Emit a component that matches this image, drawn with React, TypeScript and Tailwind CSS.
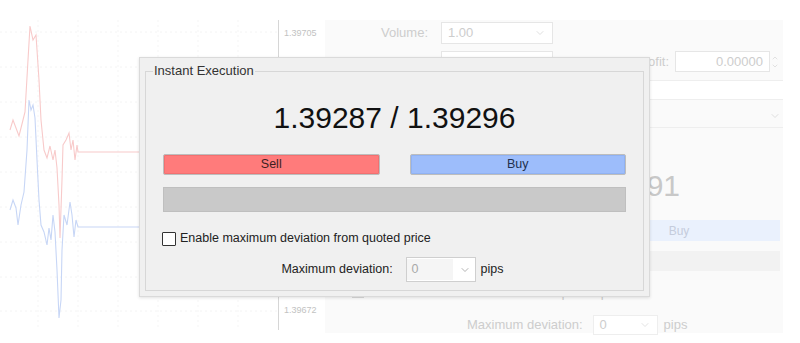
import { ChevronDown, ChevronUp } from "lucide-react";

const redPath = [
  [10, 130], [13, 120], [16, 128], [19, 136], [22, 124], [25, 112], [28, 60], [30, 26], [33, 40],
  [36, 35], [39, 80], [41, 120], [44, 150], [47, 158], [50, 146], [53, 160], [55, 150], [57, 168],
  [59, 205], [60, 238], [62, 180], [63, 145], [66, 140], [69, 133], [71, 150], [73, 140], [75, 160],
  [77, 145], [78, 152], [278, 152],
];

const bluePath = [
  [10, 210], [13, 200], [16, 208], [18, 225], [21, 205], [24, 192], [27, 150], [29, 100], [31, 110],
  [33, 105], [35, 118], [37, 160], [39, 200], [41, 225], [44, 232], [47, 245], [49, 228], [51, 240],
  [53, 215], [55, 232], [57, 270], [59, 318], [61, 300], [62, 250], [64, 215], [67, 225], [70, 202],
  [72, 215], [74, 237], [76, 220], [78, 227], [278, 227],
];

const toPoints = (pts: number[][]) => pts.map(([x, y]) => `${x},${y}`).join(" ");

function Chart() {
  const rows = [32, 67, 102, 137, 172, 207, 242, 277, 311];
  const cols = [38, 78, 118, 158, 198, 238];
  return (
    <svg width="278" height="343" viewBox="0 0 278 343" className="shrink-0">
      {rows.map((y) => (
        <line key={`r${y}`} x1="0" y1={y} x2="278" y2={y} stroke="#f4f4f4" strokeDasharray="2 3" />
      ))}
      {cols.map((x) => (
        <line key={`c${x}`} x1={x} y1="20" x2={x} y2="330" stroke="#f5f5f5" strokeDasharray="2 3" />
      ))}
      <polyline points={toPoints(redPath)} fill="none" stroke="#f8caca" strokeWidth="1.1" />
      <polyline points={toPoints(bluePath)} fill="none" stroke="#c7d6f6" strokeWidth="1.1" />
    </svg>
  );
}

function FadedDialog() {
  return (
    <div className="mt-[20px] h-[313px] w-[458px] bg-[#fafafa] text-[13px] text-[#cdcdcd]">
      {/* volume */}
      <div className="mt-[2px] flex h-[22px] items-center">
        <span className="w-[107px] pr-1 text-right">Volume:</span>
        <div className="ml-[9px] flex h-[22px] w-[112px] items-center justify-between border border-[#e6e6e6] bg-white px-1.5">
          <span>1.00</span>
          <ChevronDown className="h-3 w-3 text-[#d4d4d4]" strokeWidth={1.5} />
        </div>
      </div>
      {/* stop loss / take profit */}
      <div className="mt-[7px] flex h-[21px] items-center">
        <div className="ml-[116px] h-[21px] w-[112px] border border-[#e6e6e6] bg-white" />
        <span className="ml-auto pr-[6px]">Take Profit:</span>
        <div className="flex h-[21px] w-[95px] items-center justify-end border border-[#e6e6e6] bg-white px-1.5">
          0.00000
        </div>
        <div className="mr-[4px] flex w-[9px] flex-col items-center text-[#d4d4d4]">
          <ChevronUp className="h-2 w-2" strokeWidth={2} />
          <ChevronDown className="h-2 w-2" strokeWidth={2} />
        </div>
      </div>
      {/* comment */}
      <div className="ml-[20px] mt-[8px] h-[20px] border-y border-[#eeeeee] bg-white" />
      {/* type */}
      <div className="ml-[20px] mt-[5px] flex h-[23px] items-center justify-end border-b border-[#eeeeee] pr-[2px]">
        <ChevronDown className="h-3 w-3 text-[#d4d4d4]" strokeWidth={1.5} />
      </div>
      {/* price, mostly hidden behind the popup */}
      <div className="mt-[40px] flex h-[36px] items-center justify-end pr-[103px] text-[30px] leading-none text-[#c8c8c8]">
        91
      </div>
      <div className="mt-[16px] flex h-[21px] justify-end pr-[3px]">
        <div className="flex w-[202px] items-center justify-center bg-[#eaf1fd] text-[12px] text-[#c5ccdc]">Buy</div>
      </div>
      <div className="ml-[20px] mr-[3px] mt-[10px] h-[20px] bg-[#f2f2f2]" />
      <div className="mt-[15px] flex h-[13px] items-center pl-[27px]">
        <span className="h-[11px] w-[12px] border border-[#dadada]" />
        <span className="ml-[4px]">Enable maximum deviation from quoted price</span>
      </div>
      <div className="mt-[16px] flex h-[20px] items-center pl-[142px]">
        <span>Maximum deviation:</span>
        <div className="ml-[10px] flex h-[20px] w-[65px] items-center justify-between border border-[#eeeeee] bg-white px-1.5">
          <span>0</span>
          <ChevronDown className="h-3 w-3 text-[#dadada]" strokeWidth={1.5} />
        </div>
        <span className="ml-[6px]">pips</span>
      </div>
    </div>
  );
}

function InstantExecution() {
  return (
    <div className="absolute left-[139px] top-[57px] h-[240px] w-[511px] border border-[#dadada] bg-[#f0f0f0] px-[5px] pt-[6px] shadow-[0_1px_3px_rgba(0,0,0,0.12)]">
      <fieldset className="h-[227px] border border-[#d7d7d7] px-[17px]">
        <legend className="ml-[-10px] px-[1px] text-[13px] leading-[14px] text-[#333]">Instant Execution</legend>
        <div className="mt-[22px] flex h-[36px] items-center justify-center text-[30px] leading-none text-[#111]">
          1.39287 / 1.39296
        </div>
        <div className="mt-[18px] flex h-[21px] gap-[30px]">
          <button className="flex-1 rounded-[2px] border border-[#bdbdbd] bg-[#ff7b7b] text-[12.5px] text-[#3d1f1f] shadow-[inset_0_0_0_1px_#f27070]">
            Sell
          </button>
          <button className="flex-1 rounded-[2px] border border-[#bdbdbd] bg-[#9dbdfb] text-[12.5px] text-[#22304d] shadow-[inset_0_0_0_1px_#90b2f3]">
            Buy
          </button>
        </div>
        <div className="mt-[12px] h-[25px] border border-[#bfbfbf] bg-[#c9c9c9]" />
        <label className="ml-[-1px] mt-[19px] flex h-[15px] items-center text-[12.5px] text-[#222]">
          <span className="h-[14px] w-[14px] rounded-[1px] border border-[#333] bg-white" />
          <span className="ml-[4px]">Enable maximum deviation from quoted price</span>
        </label>
        <div className="mt-[11px] flex h-[25px] items-center justify-center text-[12.5px] text-[#222]">
          <span className="ml-[-4px]">Maximum deviation:</span>
          <div className="ml-[13px] flex h-[25px] w-[70px] items-center border border-[#cfcfcf] bg-white">
            <span className="flex h-[21px] w-[46px] items-center bg-[#f5f5f5] pl-[5px] text-[#a9a9a9]">0</span>
            <ChevronDown className="ml-[6px] h-3 w-3 text-[#9a9a9a]" strokeWidth={1.5} />
          </div>
          <span className="ml-[5px]">pips</span>
        </div>
      </fieldset>
    </div>
  );
}

export default function App() {
  return (
    <div className="relative flex h-[343px] w-[800px] overflow-hidden bg-white font-['Liberation_Sans',Arial,sans-serif]">
      <Chart />
      <div className="relative mt-[20px] h-[310px] w-[47px] shrink-0 border-l border-[#d6d6d6] text-[9px] text-[#c2c2c2]">
        <span className="absolute left-[5px] top-[7px]">1.39705</span>
        <span className="absolute left-[5px] top-[284px]">1.39672</span>
      </div>
      <FadedDialog />
      <InstantExecution />
    </div>
  );
}
